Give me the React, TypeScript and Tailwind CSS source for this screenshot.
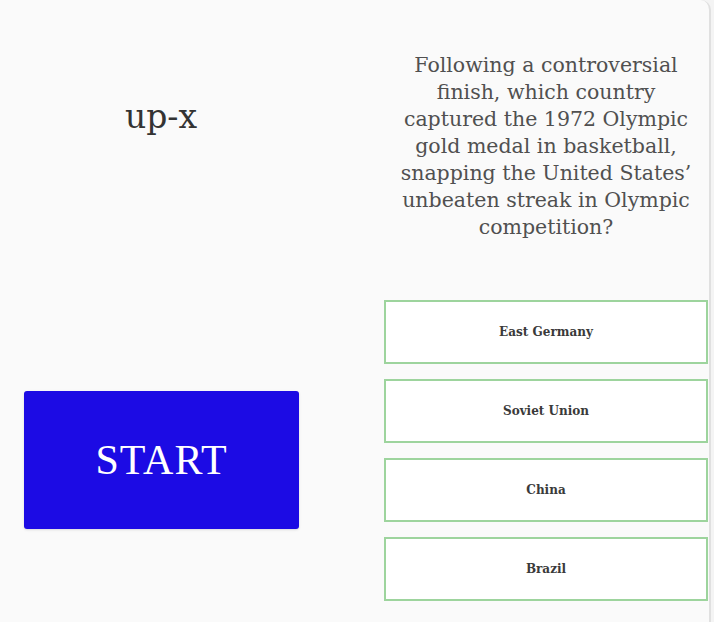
import React from 'react';

const answers = ['East Germany', 'Soviet Union', 'China', 'Brazil'];

const lines = [
  'Following a controversial',
  'finish, which country',
  'captured the 1972 Olympic',
  'gold medal in basketball,',
  'snapping the United States’',
  'unbeaten streak in Olympic',
  'competition?',
];

const dejavu = { fontFamily: '"DejaVu Serif", serif' };
const liberation = { fontFamily: '"Liberation Serif", serif' };

export default function App() {
  return (
    <div className="w-[714px] h-[622px] bg-[#f4f4f4] overflow-hidden" style={dejavu}>
      <div className="w-[711px] h-[622px] bg-[#fafafa] border-r-2 border-[#e0e0e0] rounded-tr-[10px] flex">
        <div className="w-[322px] flex flex-col items-center">
          <div className="mt-[97px] h-[40px] text-[33px] leading-[40px] text-[#333]">up-x</div>
          <button
            className="mt-[254px] ml-[1px] w-[275px] h-[138px] rounded-[3px] bg-[#1c0be4] text-white text-[42px] tracking-[1px] shadow-sm"
            style={liberation}
          >
            START
          </button>
        </div>
        <div className="ml-[62px] w-[324px] flex flex-col">
          <div className="h-[300px] pt-[52px] text-center text-[20.5px] leading-[27px] text-[#505050] whitespace-nowrap">
            {lines.map((l) => (
              <div key={l}>{l}</div>
            ))}
          </div>
          <div className="flex flex-col gap-[15px]">
            {answers.map((a) => (
              <div
                key={a}
                className="h-[64px] bg-white border-2 border-[#9dd49d] flex items-center justify-center text-[12px] font-bold text-[#3a3a3a]"
              >
                {a}
              </div>
            ))}
          </div>
        </div>
      </div>
    </div>
  );
}
